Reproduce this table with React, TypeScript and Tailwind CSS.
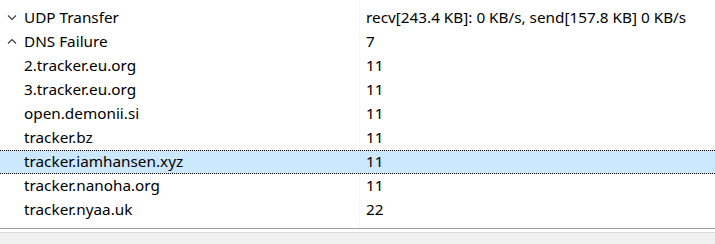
import React from "react";

type Row = { name: string; value: string; chevron?: "down" | "up"; selected?: boolean };

const rows: Row[] = [
  { name: "UDP Transfer", value: "recv[243.4 KB]: 0 KB/s, send[157.8 KB] 0 KB/s", chevron: "down" },
  { name: "DNS Failure", value: "7", chevron: "up" },
  { name: "2.tracker.eu.org", value: "11" },
  { name: "3.tracker.eu.org", value: "11" },
  { name: "open.demonii.si", value: "11" },
  { name: "tracker.bz", value: "11" },
  { name: "tracker.iamhansen.xyz", value: "11", selected: true },
  { name: "tracker.nanoha.org", value: "11" },
  { name: "tracker.nyaa.uk", value: "22" },
];

function Chevron({ dir }: { dir: "down" | "up" }) {
  return (
    <svg width="10" height="7" viewBox="0 0 10 7" className="shrink-0">
      {dir === "down" ? (
        <path d="M1 1.5 L5 5.5 L9 1.5" fill="none" stroke="#3c3c3c" strokeWidth="1.2" />
      ) : (
        <path d="M1 5.5 L5 1.5 L9 5.5" fill="none" stroke="#3c3c3c" strokeWidth="1.2" />
      )}
    </svg>
  );
}

export default function App() {
  return (
    <div
      className="w-[715px] h-[244px] bg-[#f0f0f0] flex flex-col overflow-hidden"
      style={{ fontFamily: '"Noto Sans", "Liberation Sans", sans-serif' }}
    >
      <div className="h-[228px] bg-white relative pt-[6px]">
        <div className="absolute left-[359px] top-0 bottom-0 w-px bg-[#f3f6fa]" />
        {rows.map((r) => (
          <div
            key={r.name}
            className={
              "relative flex h-[24px] items-center text-[15.3px] text-[#000] " +
              (r.selected ? "bg-[#cce8ff] border-y border-dotted border-black" : "")
            }
          >
            <div className="w-[359px] flex items-center shrink-0">
              <div className="w-[24px] flex justify-center pl-[1px] pr-[2px]">
                {r.chevron ? <Chevron dir={r.chevron} /> : null}
              </div>
              <span className="leading-none">{r.name}</span>
            </div>
            <div className="pl-[7px] leading-none">{r.value}</div>
          </div>
        ))}
      </div>
      <div className="h-px bg-[#a0a0a0]" />
      <div className="h-[3px] bg-white" />
      <div className="h-px bg-[#d9d9d9]" />
      <div className="flex-1 bg-[#f0f0f0]" />
    </div>
  );
}
